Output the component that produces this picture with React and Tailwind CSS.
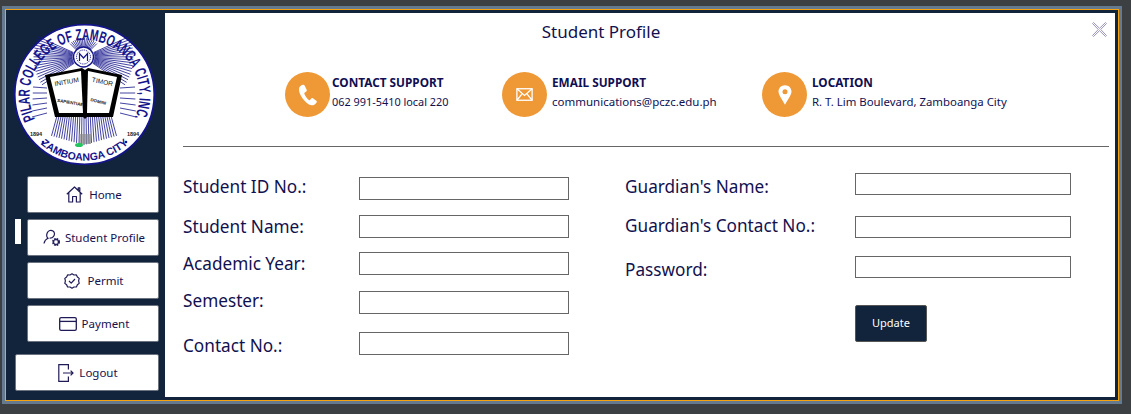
import React from "react";

const FONT = "font-['Noto_Sans','Open_Sans',sans-serif]";
const BLUE = "#14148c";

function pt(cx, cy, r, deg) {
  const a = (deg * Math.PI) / 180;
  return [cx + r * Math.cos(a), cy + r * Math.sin(a)];
}

function Logo() {
  const cx = 70.5, cy = 70.5;
  const sx = 69.5, sy = 33;
  const rays = [];
  // side fans from the seal
  for (let d = -24; d <= 34; d += 3.4) {
    const [x1, y1] = pt(sx, sy, 11, d);
    const [x2, y2] = pt(sx, sy, 50, d);
    rays.push([x1, y1, x2, y2]);
    const [x3, y3] = pt(sx, sy, 11, 180 - d);
    const [x4, y4] = pt(sx, sy, 50, 180 - d);
    rays.push([x3, y3, x4, y4]);
  }
  for (let d = -135; d <= -45; d += 6) {
    const [x1, y1] = pt(sx, sy, 10, d);
    const [x2, y2] = pt(sx, sy, 19, d);
    rays.push([x1, y1, x2, y2]);
  }
  // fan below the book
  for (let i = -13; i <= 13; i++) {
    rays.push([70 + i * 2.1, 93, 70 + i * 2.5, 121 - Math.abs(i) * 0.7]);
  }
  // fans beside the book
  for (let i = 0; i < 6; i++) {
    rays.push([33, 64 + i * 5, 19 - i * 0.2, 63 + i * 6]);
    rays.push([106, 64 + i * 5, 121 + i * 0.2, 63 + i * 6]);
  }
  return (
    <svg width="141" height="141" viewBox="0 0 141 141" className="block">
      <defs>
        <path id="logoTop" d="M 21 95 A 55 55 0 1 1 120 95" />
        <path id="logoBottom" d="M 13 103 A 66 66 0 0 0 128 103" />
      </defs>
      <circle cx={cx} cy={cy} r="69.8" fill="#fff" stroke={BLUE} strokeWidth="1.8" />
      <g stroke={BLUE} strokeWidth="0.8">
        {rays.map((r, i) => (
          <line key={i} x1={r[0]} y1={r[1]} x2={r[2]} y2={r[3]} />
        ))}
      </g>
      <circle cx={sx} cy={sy} r="10" fill="#fff" stroke={BLUE} strokeWidth="1.4" />
      <circle cx={sx} cy={sy} r="7" fill="none" stroke={BLUE} strokeWidth="1" strokeDasharray="1.2 1" />
      <path d="M65.5 37 L65.5 29.5 L69.5 34 L73.5 29.5 L73.5 37" fill="none" stroke={BLUE} strokeWidth="1.2" />
      {/* book */}
      <path d="M31 51 L68 44 L71 46 L74 44 L108 51 L99 93 L73 93 L71 95 L69 93 L41 93 Z" fill="#000" />
      <path d="M36 53 L67 47 L69 89 L45 89 Z" fill="#fff" />
      <path d="M103 53 L74 47 L73 89 L95 89 Z" fill="#fff" />
      <g fontFamily="Liberation Sans, sans-serif" fill="#111">
        <text x="53" y="60" textAnchor="middle" fontSize="6.6" transform="rotate(-10 53 60)">INITIUM</text>
        <text x="88" y="60" textAnchor="middle" fontSize="6.6" transform="rotate(12 88 60)">TIMOR</text>
        <text x="56" y="80" textAnchor="middle" fontSize="4.4" fontWeight="700" transform="rotate(10 56 80)">SAPIENTIAE</text>
        <text x="84" y="79" textAnchor="middle" fontSize="4.4" fontWeight="700" transform="rotate(14 84 79)">DOMINI</text>
      </g>
      <text fontFamily="Liberation Sans, sans-serif" fontWeight="700" fontSize="16" fill={BLUE}>
        <textPath href="#logoTop" textLength="220" lengthAdjust="spacingAndGlyphs">PILAR COLLEGE OF ZAMBOANGA CITY, INC.</textPath>
      </text>
      <text fontFamily="Liberation Sans, sans-serif" fontWeight="700" fontSize="10.5" fill={BLUE}>
        <textPath href="#logoBottom" startOffset="50%" textAnchor="middle">ZAMBOANGA CITY</textPath>
      </text>
      <text x="22" y="112" textAnchor="middle" fontFamily="Liberation Sans, sans-serif" fontWeight="700" fontSize="5.5" fill="#222">1894</text>
      <text x="119" y="112" textAnchor="middle" fontFamily="Liberation Sans, sans-serif" fontWeight="700" fontSize="5.5" fill="#222">1894</text>
      <circle cx="29" cy="118" r="1.3" fill={BLUE} />
      <circle cx="112" cy="118" r="1.3" fill={BLUE} />
      <rect x="65" y="110" width="12" height="10" fill="#8b8b8b" opacity="0.7" />
      <ellipse cx="65" cy="121" rx="4" ry="2" fill="#22c55e" />
    </svg>
  );
}

const IC = "#1e1b57";

const HomeIcon = () => (
  <svg width="17" height="17" viewBox="0 0 17 17" fill="none" stroke={IC} strokeWidth="1.2" strokeLinejoin="round">
    <path d="M0.8 8.2 L8.5 1 L16.2 8.2 M2.8 6.6 V16 H6.6 V10.5 H10.4 V16 H14.2 V6.6 M12.2 4.6 V1.8 H13.8 V6" />
  </svg>
);
const ProfileIcon = () => (
  <svg width="18" height="18" viewBox="0 0 18 18" fill="none" stroke={IC} strokeWidth="1.2">
    <path d="M1 14.5 C1.6 11.5 3.4 10 5 9.3 C3.6 8 3.4 5.8 4.3 3.7 C5.3 1.4 8 0.8 10 2 C12 3.3 11.8 6 10.4 7.6 C9.6 8.6 8 9.2 6.6 9.1" />
    <circle cx="13" cy="13" r="2.9" strokeWidth="2.2" strokeDasharray="1.6 0.7" />
    <circle cx="13" cy="13" r="2.6" strokeWidth="0.9" />
  </svg>
);
const PermitIcon = () => (
  <svg width="16" height="16" viewBox="0 0 16 16" fill="none" stroke={IC} strokeWidth="1.2" strokeLinejoin="round">
    <path d="M8 0.8 L10 2 L12.4 1.9 L13.4 4 L15.2 5.4 L14.6 7.8 L15.2 10.4 L13.4 11.8 L12.4 14 L10 14 L8 15.2 L6 14 L3.6 14 L2.6 11.8 L0.8 10.4 L1.4 7.8 L0.8 5.4 L2.6 4 L3.6 1.9 L6 2 Z" />
    <path d="M5 8 L7.2 10.2 L11 6" />
  </svg>
);
const CardIcon = () => (
  <svg width="18" height="14" viewBox="0 0 18 14" fill="none" stroke={IC} strokeWidth="1.3">
    <rect x="0.7" y="0.7" width="16.6" height="12.6" rx="1.4" />
    <path d="M0.7 4.4 H17.3" />
  </svg>
);
const LogoutIcon = () => (
  <svg width="16" height="18" viewBox="0 0 16 18" fill="none" stroke={IC} strokeWidth="1.2">
    <path d="M10.4 5.5 V0.7 H0.8 V17.3 H10.4 V12.5" />
    <path d="M5 9 H15 M12.6 6.6 L15 9 L12.6 11.4" />
  </svg>
);

const btn = "flex items-center justify-center bg-white border border-[#6b7280] rounded-[2px] text-[11.5px] text-[#15114f] h-[37px]";

function Sidebar() {
  return (
    <aside className="w-[159px] shrink-0 flex flex-col pt-[11px] pl-[9px]">
      <div className="ml-[-1px]">
        <Logo />
      </div>
      <div className="ml-[12px] mt-[11px] w-[132px] flex flex-col gap-[6px]">
        <button className={btn}>
          <span className="mr-[6px] ml-[2px]"><HomeIcon /></span>
          Home
        </button>
        <div className="relative">
          <span className="absolute left-[-12px] top-0 h-[25px] w-[6px] bg-white" />
          <button className={`${btn} w-full text-[11.3px]`}>
            <span className="mr-[4px] ml-[2px]"><ProfileIcon /></span>
            Student Profile
          </button>
        </div>
        <button className={btn}>
          <span className="mr-[7px] ml-[2px]"><PermitIcon /></span>
          Permit
        </button>
        <button className={btn}>
          <span className="mr-[5px] ml-[2px]"><CardIcon /></span>
          Payment
        </button>
      </div>
      <button className={`${btn} w-[144px] mt-[12px]`}>
        <span className="mr-[5px] ml-[2px]"><LogoutIcon /></span>
        Logout
      </button>
    </aside>
  );
}

const PhoneGlyph = () => (
  <svg width="20" height="22" viewBox="0 0 20 22" fill="#fff">
    <path d="M4.6 0.8 C3 1.3 1.2 2.6 1 5 C0.8 8 2.6 12 5 15 C7.6 18.3 10.6 21 13.6 21.3 C15.8 21.5 17.6 19.8 18.6 18.4 C19 17.8 18.8 17.2 18.3 16.8 L14.9 14.2 C14.3 13.8 13.7 13.9 13.3 14.4 L12 15.9 C11.5 16.3 11 16.2 10.5 15.8 C8.8 14.4 7.2 12 6.4 10 C6.2 9.4 6.3 8.9 6.8 8.6 L8.3 7.4 C8.8 7 8.9 6.4 8.7 5.8 L6.6 1.5 C6.2 0.8 5.4 0.5 4.6 0.8 Z" />
  </svg>
);
const MailGlyph = () => (
  <svg width="17" height="13" viewBox="0 0 18 14" fill="none" stroke="#fff" strokeWidth="1.4">
    <rect x="0.8" y="0.8" width="16.4" height="12.4" />
    <path d="M0.8 0.8 L9 8 L17.2 0.8 M0.8 13.2 L6.6 6 M17.2 13.2 L11.4 6" />
  </svg>
);
const PinGlyph = () => (
  <svg width="14" height="20" viewBox="0 0 14 20">
    <path fillRule="evenodd" fill="#fff" d="M7 0.2 C3.2 0.2 0.5 3 0.5 6.6 C0.5 10.4 5 15.8 7 19.8 C9 15.8 13.5 10.4 13.5 6.6 C13.5 3 10.8 0.2 7 0.2 Z M7 4.2 A2.5 2.5 0 1 1 7 9.2 A2.5 2.5 0 1 1 7 4.2 Z" />
  </svg>
);

function Contact({ icon, title, text, className, textClass, bodyClass }) {
  return (
    <div className={`flex items-start ${className}`}>
      <div className="w-[45px] h-[45px] rounded-full bg-[#ee9836] flex items-center justify-center shrink-0">{icon}</div>
      <div className={`text-[#0f0f52] leading-[20px] whitespace-nowrap ${bodyClass}`}>
        <div className="font-bold text-[11.8px]">{title}</div>
        <div className={textClass}>{text}</div>
      </div>
    </div>
  );
}

const label = "text-[17.2px] leading-[22px] text-[#11114f] whitespace-nowrap";
const input = "block bg-white border border-[#666]";

function LeftRow({ text, mt, labelMt }) {
  return (
    <div className={`flex items-start h-[23px] ${mt}`}>
      <div className={`w-[176px] ${label} ${labelMt}`}>{text}</div>
      <input className={`${input} w-[210px] h-[23px]`} aria-label={text} />
    </div>
  );
}

function RightRow({ text, mt, labelMt }) {
  return (
    <div className={`flex items-start h-[22px] ${mt}`}>
      <div className={`w-[230px] ${label} ${labelMt}`}>{text}</div>
      <input className={`${input} w-[216px] h-[22px]`} aria-label={text} />
    </div>
  );
}

export default function App() {
  return (
    <div className={`w-[1131px] h-[414px] bg-[#3c4043] pt-[6px] pl-[2px] pr-[9px] pb-[10px] ${FONT}`}>
      <div className="h-full border-[3px] border-[#657a8f]">
        <div className="h-full border border-[#f5a30f] bg-[#11243b] pt-[3px] pr-[3px] pb-[3px] flex">
          <Sidebar />
          <main className="relative flex-1 bg-white">
            <h1 className="text-center text-[17px] leading-[24px] text-[#11114f] pt-[7px] pr-[78px] font-normal">Student Profile</h1>
            <svg className="absolute left-[927px] top-[9px]" width="15" height="15" viewBox="0 0 15 15" fill="none" stroke="#9a96b8" strokeWidth="1">
              <path d="M1.5 0.5 L7.5 6.3 L13.5 0.5 L14.5 1.5 L8.7 7.5 L14.5 13.5 L13.5 14.5 L7.5 8.7 L1.5 14.5 L0.5 13.5 L6.3 7.5 L0.5 1.5 Z" />
            </svg>
            <div className="flex mt-[28px] pl-[120px]">
              <Contact className="w-[217px]" bodyClass="ml-[2px]" textClass="text-[10.9px]" icon={<PhoneGlyph />} title="CONTACT SUPPORT" text="062 991-5410 local 220" />
              <Contact className="w-[260px]" bodyClass="ml-[5px]" textClass="text-[11.5px]" icon={<MailGlyph />} title="EMAIL SUPPORT" text="communications@pczc.edu.ph" />
              <Contact bodyClass="ml-[5px]" textClass="text-[11.4px]" icon={<PinGlyph />} title="LOCATION" text="R. T. Lim Boulevard, Zamboanga City" />
            </div>
            <div className="h-px bg-[#666] ml-[18px] mr-[6px] mt-[29px]" />
            <div className="flex">
              <div className="ml-[18px] w-[442px]">
                <LeftRow text="Student ID No.:" mt="mt-[30px]" labelMt="mt-[-1px]" />
                <LeftRow text="Student Name:" mt="mt-[15px]" labelMt="mt-[1px]" />
                <LeftRow text="Academic Year:" mt="mt-[14px]" labelMt="mt-[1px]" />
                <LeftRow text="Semester:" mt="mt-[16px]" labelMt="mt-[-1px]" />
                <LeftRow text="Contact No.:" mt="mt-[18px]" labelMt="mt-[3px]" />
              </div>
              <div>
                <RightRow text="Guardian's Name:" mt="mt-[26px]" labelMt="mt-[3px]" />
                <RightRow text="Guardian's Contact No.:" mt="mt-[21px]" labelMt="mt-[-1px]" />
                <RightRow text="Password:" mt="mt-[18px]" labelMt="mt-[3px]" />
                <button className="block ml-[230px] mt-[27px] w-[72px] h-[37px] bg-[#11243b] border border-[#555] rounded-[2px] text-white text-[11px]">Update</button>
              </div>
            </div>
          </main>
        </div>
      </div>
    </div>
  );
}
